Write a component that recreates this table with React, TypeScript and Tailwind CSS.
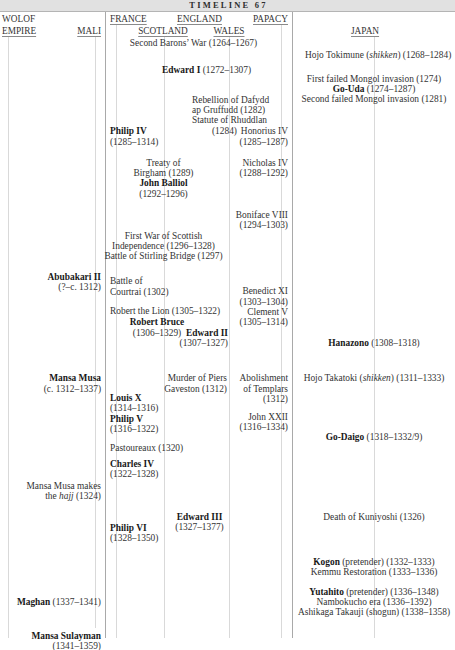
import React from "react";

type Align = "l" | "r" | "c";
type Entry = { x: number; y: number; a: Align; lines: React.ReactNode[]; u?: boolean };

const TOP = 12;
const HALF = 5.2;

const B = ({ children }: { children: React.ReactNode }) => (
  <span className="font-bold text-[#181818]">{children}</span>
);
const I = ({ children }: { children: React.ReactNode }) => <span className="italic">{children}</span>;

const headings: Entry[] = [
  { x: 2, y: 19.5, a: "l", lines: ["WOLOF"] },
  { x: 2, y: 31, a: "l", lines: ["EMPIRE"], u: true },
  { x: 101, y: 31, a: "r", lines: ["MALI"], u: true },
  { x: 110, y: 19.5, a: "l", lines: ["FRANCE"], u: true },
  { x: 177, y: 19.5, a: "l", lines: ["ENGLAND"], u: true },
  { x: 288, y: 19.5, a: "r", lines: ["PAPACY"], u: true },
  { x: 163, y: 31, a: "c", lines: ["SCOTLAND"], u: true },
  { x: 229, y: 31, a: "c", lines: ["WALES"], u: true },
  { x: 351, y: 31, a: "l", lines: ["JAPAN"], u: true },
];

const entries: Entry[] = [
  { x: 193.5, y: 43, a: "c", lines: ["Second Barons’ War (1264–1267)"] },
  { x: 305, y: 55.5, a: "l", lines: [<>Hojo Tokimune (<I>shikken</I>) (1268–1284)</>] },
  { x: 162, y: 70.5, a: "l", lines: [<><B>Edward I</B> (1272–1307)</>] },
  {
    x: 374,
    y: 79,
    a: "c",
    lines: ["First failed Mongol invasion (1274)", <><B>Go-Uda</B> (1274–1287)</>, "Second failed Mongol invasion (1281)"],
  },
  { x: 192, y: 100, a: "l", lines: ["Rebellion of Dafydd", "ap Gruffudd (1282)", "Statute of Rhuddlan"] },
  { x: 212, y: 131.5, a: "l", lines: ["(1284)"] },
  { x: 288, y: 131.5, a: "r", lines: ["Honorius IV", "(1285–1287)"] },
  { x: 110, y: 131.5, a: "l", lines: [<B>Philip IV</B>, "(1285–1314)"] },
  { x: 163.5, y: 163, a: "c", lines: ["Treaty of", "Birgham (1289)", <B>John Balliol</B>, "(1292–1296)"] },
  { x: 288, y: 163, a: "r", lines: ["Nicholas IV", "(1288–1292)"] },
  { x: 288, y: 215, a: "r", lines: ["Boniface VIII", "(1294–1303)"] },
  {
    x: 163.5,
    y: 236,
    a: "c",
    lines: ["First War of Scottish", "Independence (1296–1328)", "Battle of Stirling Bridge (1297)"],
  },
  { x: 101, y: 277, a: "r", lines: [<B>Abubakari II</B>, "(?–c. 1312)"] },
  { x: 110, y: 281.5, a: "l", lines: ["Battle of", "Courtrai (1302)"] },
  { x: 288, y: 291.5, a: "r", lines: ["Benedict XI", "(1303–1304)", "Clement V", "(1305–1314)"] },
  { x: 110, y: 311.5, a: "l", lines: ["Robert the Lion (1305–1322)"] },
  { x: 157, y: 322.5, a: "c", lines: [<B>Robert Bruce</B>, "(1306–1329)"] },
  { x: 228, y: 333, a: "r", lines: [<B>Edward II</B>, "(1307–1327)"] },
  { x: 374, y: 343, a: "c", lines: [<><B>Hanazono</B> (1308–1318)</>] },
  { x: 101, y: 378.5, a: "r", lines: [<B>Mansa Musa</B>, "(c. 1312–1337)"] },
  { x: 227, y: 378.5, a: "r", lines: ["Murder of Piers", "Gaveston (1312)"] },
  { x: 288, y: 378.5, a: "r", lines: ["Abolishment", "of Templars", "(1312)"] },
  { x: 374, y: 378, a: "c", lines: [<>Hojo Takatoki (<I>shikken</I>) (1311–1333)</>] },
  { x: 110, y: 398.3, a: "l", lines: [<B>Louis X</B>, "(1314–1316)", <B>Philip V</B>, "(1316–1322)"] },
  { x: 288, y: 417, a: "r", lines: ["John XXII", "(1316–1334)"] },
  { x: 374, y: 437.3, a: "c", lines: [<><B>Go-Daigo</B> (1318–1332/9)</>] },
  { x: 110, y: 448.3, a: "l", lines: ["Pastoureaux (1320)"] },
  { x: 110, y: 464, a: "l", lines: [<B>Charles IV</B>, "(1322–1328)"] },
  { x: 101, y: 486, a: "r", lines: ["Mansa Musa makes", <>the <I>hajj</I> (1324)</>] },
  { x: 199.5, y: 517.3, a: "c", lines: [<B>Edward III</B>, "(1327–1377)"] },
  { x: 374, y: 516.7, a: "c", lines: ["Death of Kuniyoshi (1326)"] },
  { x: 110, y: 527.7, a: "l", lines: [<B>Philip VI</B>, "(1328–1350)"] },
  {
    x: 374,
    y: 561.7,
    a: "c",
    lines: [<><B>Kogon</B> (pretender) (1332–1333)</>, "Kemmu Restoration (1333–1336)"],
  },
  {
    x: 374,
    y: 591.7,
    a: "c",
    lines: [
      <><B>Yutahito</B> (pretender) (1336–1348)</>,
      "Nambokucho era (1336–1392)",
      "Ashikaga Takauji (shogun) (1338–1358)",
    ],
  },
  { x: 101, y: 601.7, a: "r", lines: [<><B>Maghan</B> (1337–1341)</>] },
  { x: 101, y: 636, a: "r", lines: [<B>Mansa Sulayman</B>, "(1341–1359)"] },
];

const rules = [
  { x: 8, t: 37, b: 638, dark: false },
  { x: 95, t: 37, b: 628, dark: false },
  { x: 105, t: 12, b: 638, dark: true },
  { x: 116, t: 25, b: 638, dark: false },
  { x: 164, t: 37, b: 638, dark: false },
  { x: 229, t: 37, b: 638, dark: false },
  { x: 281, t: 25, b: 638, dark: false },
  { x: 292, t: 12, b: 638, dark: true },
  { x: 374, t: 37, b: 638, dark: false },
];

function place(e: Entry): React.CSSProperties {
  const top = e.y - TOP - HALF;
  if (e.a === "l") return { top, left: e.x };
  if (e.a === "r") return { top, right: 455 - e.x };
  return { top, left: e.x, transform: "translateX(-50%)" };
}

function Item({ e, heading }: { e: Entry; heading?: boolean }) {
  const align = e.a === "l" ? "text-left" : e.a === "r" ? "text-right" : "text-center";
  return (
    <div
      className={`absolute whitespace-nowrap leading-[10.35px] ${align} ${
        heading ? "text-[9.3px] text-[#353535]" : "text-[9.4px] text-[#333333]"
      }`}
      style={place(e)}
    >
      {e.lines.map((l, i) => (
        <div key={i} className={e.u ? "underline decoration-[#8a8a8a] underline-offset-[1.5px]" : ""}>
          {l}
        </div>
      ))}
    </div>
  );
}

export default function App() {
  return (
    <div className="w-[455px] h-[650px] overflow-hidden bg-white font-['Liberation_Serif','Times_New_Roman',serif]">
      <div className="h-[12px] bg-[#e1e1e1] border-b border-[#b4b4b4] flex items-center justify-center">
        <span className="text-[8.5px] font-bold tracking-[2.2px] text-[#2e2e2e] leading-none pl-[2px]">
          TIMELINE 67
        </span>
      </div>
      <div className="relative h-[638px]">
        {rules.map((r, i) => (
          <div
            key={i}
            className={`absolute w-px ${r.dark ? "bg-[#a9a9a9]" : "bg-[#d9d9d9]"}`}
            style={{ left: r.x, top: r.t - TOP, height: r.b - r.t }}
          />
        ))}
        {headings.map((e, i) => (
          <Item key={`h${i}`} e={e} heading />
        ))}
        {entries.map((e, i) => (
          <Item key={`e${i}`} e={e} />
        ))}
      </div>
    </div>
  );
}
